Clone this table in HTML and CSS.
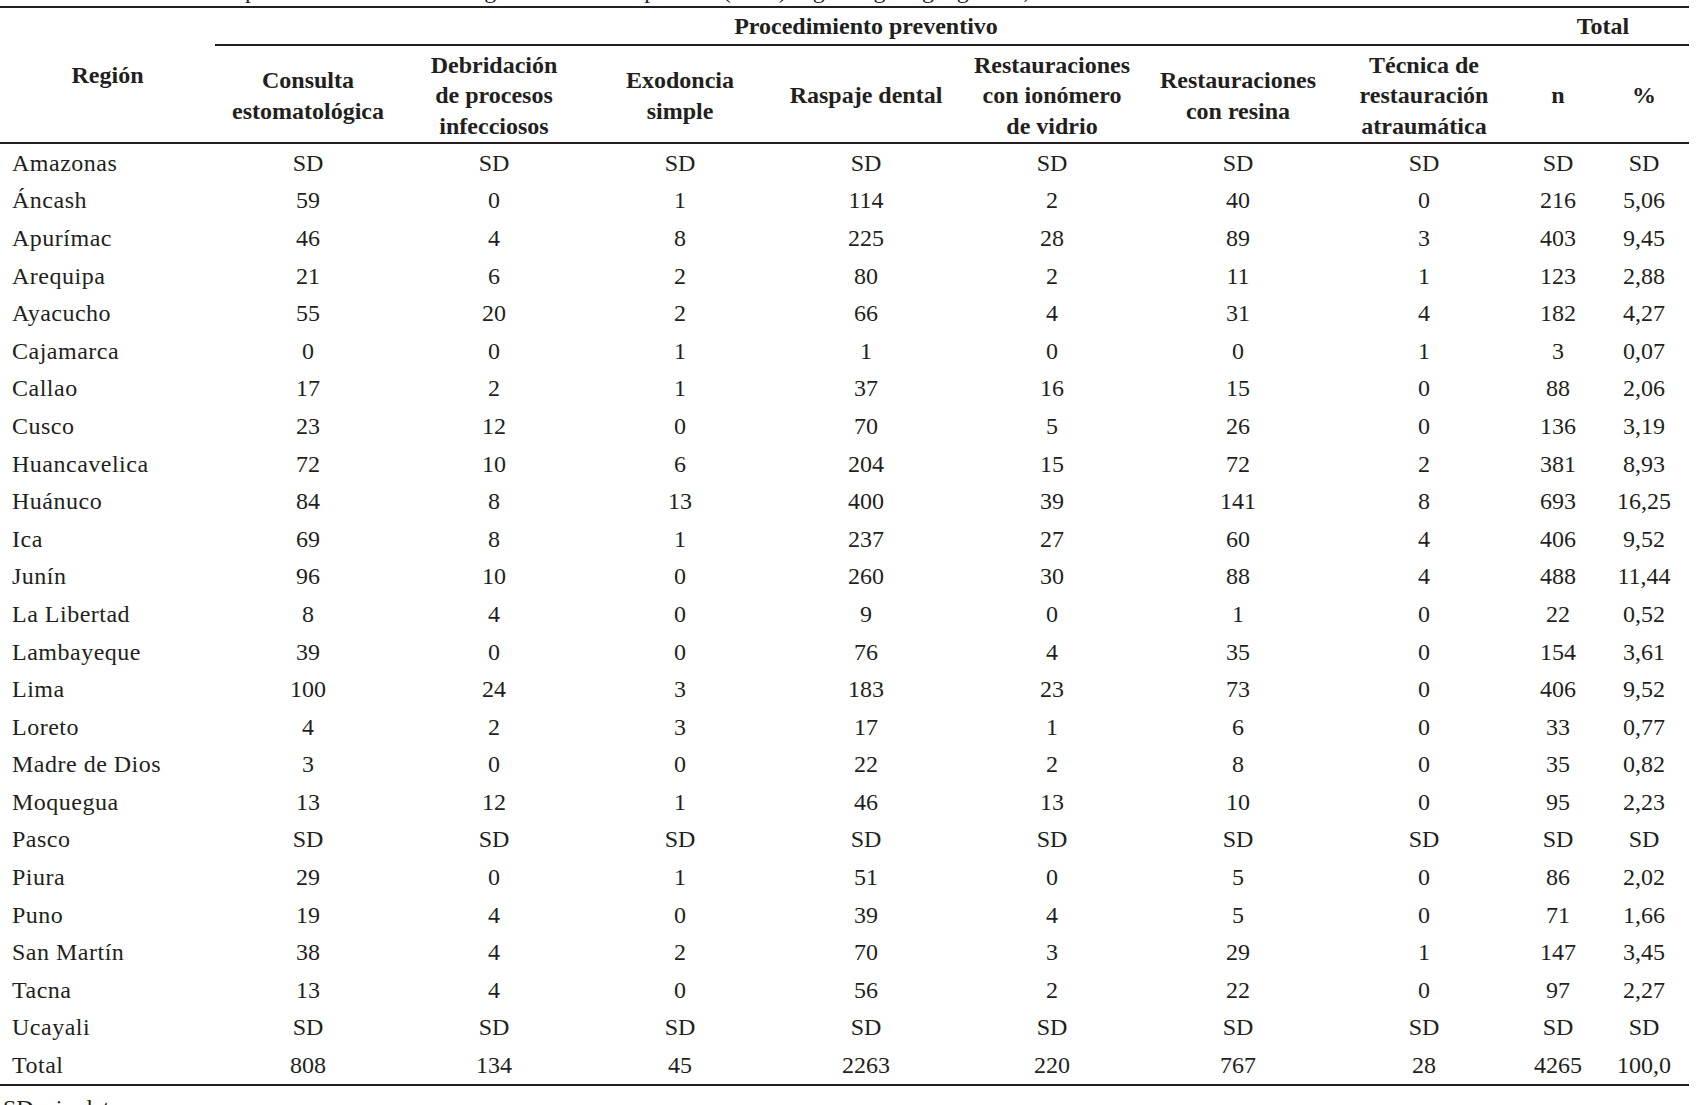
FILE: index.html
```html
<!DOCTYPE html>
<html lang="es">
<head>
<meta charset="utf-8">
<title>Procedimiento preventivo por región</title>
<link rel="stylesheet" href="styles.css">
</head>
<body>
<div class="caption">Tabla 3. Número total de procedimientos odontológicos realizados por año (2018) según región geográfica, Perú</div>
<table class="data">
  <colgroup>
    <col class="c-region">
    <col class="c-proc"><col class="c-proc"><col class="c-proc"><col class="c-proc"><col class="c-proc"><col class="c-proc"><col class="c-proc">
    <col class="c-n">
    <col class="c-pct">
  </colgroup>
  <thead>
    <tr class="h1">
      <th rowspan="2" class="region-h">Región</th>
      <th colspan="7" class="group">Procedimiento preventivo</th>
      <th colspan="2" class="group">Total</th>
    </tr>
    <tr class="h2">
      <th>Consulta<br>estomatológica</th>
      <th>Debridación<br>de procesos<br>infecciosos</th>
      <th>Exodoncia<br>simple</th>
      <th>Raspaje dental</th>
      <th>Restauraciones<br>con ionómero<br>de vidrio</th>
      <th>Restauraciones<br>con resina</th>
      <th>Técnica de<br>restauración<br>atraumática</th>
      <th>n</th>
      <th>%</th>
    </tr>
  </thead>
  <tbody>
    <tr><td class="reg">Amazonas</td><td>SD</td><td>SD</td><td>SD</td><td>SD</td><td>SD</td><td>SD</td><td>SD</td><td>SD</td><td>SD</td></tr>
    <tr><td class="reg">Áncash</td><td>59</td><td>0</td><td>1</td><td>114</td><td>2</td><td>40</td><td>0</td><td>216</td><td>5,06</td></tr>
    <tr><td class="reg">Apurímac</td><td>46</td><td>4</td><td>8</td><td>225</td><td>28</td><td>89</td><td>3</td><td>403</td><td>9,45</td></tr>
    <tr><td class="reg">Arequipa</td><td>21</td><td>6</td><td>2</td><td>80</td><td>2</td><td>11</td><td>1</td><td>123</td><td>2,88</td></tr>
    <tr><td class="reg">Ayacucho</td><td>55</td><td>20</td><td>2</td><td>66</td><td>4</td><td>31</td><td>4</td><td>182</td><td>4,27</td></tr>
    <tr><td class="reg">Cajamarca</td><td>0</td><td>0</td><td>1</td><td>1</td><td>0</td><td>0</td><td>1</td><td>3</td><td>0,07</td></tr>
    <tr><td class="reg">Callao</td><td>17</td><td>2</td><td>1</td><td>37</td><td>16</td><td>15</td><td>0</td><td>88</td><td>2,06</td></tr>
    <tr><td class="reg">Cusco</td><td>23</td><td>12</td><td>0</td><td>70</td><td>5</td><td>26</td><td>0</td><td>136</td><td>3,19</td></tr>
    <tr><td class="reg">Huancavelica</td><td>72</td><td>10</td><td>6</td><td>204</td><td>15</td><td>72</td><td>2</td><td>381</td><td>8,93</td></tr>
    <tr><td class="reg">Huánuco</td><td>84</td><td>8</td><td>13</td><td>400</td><td>39</td><td>141</td><td>8</td><td>693</td><td>16,25</td></tr>
    <tr><td class="reg">Ica</td><td>69</td><td>8</td><td>1</td><td>237</td><td>27</td><td>60</td><td>4</td><td>406</td><td>9,52</td></tr>
    <tr><td class="reg">Junín</td><td>96</td><td>10</td><td>0</td><td>260</td><td>30</td><td>88</td><td>4</td><td>488</td><td>11,44</td></tr>
    <tr><td class="reg">La Libertad</td><td>8</td><td>4</td><td>0</td><td>9</td><td>0</td><td>1</td><td>0</td><td>22</td><td>0,52</td></tr>
    <tr><td class="reg">Lambayeque</td><td>39</td><td>0</td><td>0</td><td>76</td><td>4</td><td>35</td><td>0</td><td>154</td><td>3,61</td></tr>
    <tr><td class="reg">Lima</td><td>100</td><td>24</td><td>3</td><td>183</td><td>23</td><td>73</td><td>0</td><td>406</td><td>9,52</td></tr>
    <tr><td class="reg">Loreto</td><td>4</td><td>2</td><td>3</td><td>17</td><td>1</td><td>6</td><td>0</td><td>33</td><td>0,77</td></tr>
    <tr><td class="reg">Madre de Dios</td><td>3</td><td>0</td><td>0</td><td>22</td><td>2</td><td>8</td><td>0</td><td>35</td><td>0,82</td></tr>
    <tr><td class="reg">Moquegua</td><td>13</td><td>12</td><td>1</td><td>46</td><td>13</td><td>10</td><td>0</td><td>95</td><td>2,23</td></tr>
    <tr><td class="reg">Pasco</td><td>SD</td><td>SD</td><td>SD</td><td>SD</td><td>SD</td><td>SD</td><td>SD</td><td>SD</td><td>SD</td></tr>
    <tr><td class="reg">Piura</td><td>29</td><td>0</td><td>1</td><td>51</td><td>0</td><td>5</td><td>0</td><td>86</td><td>2,02</td></tr>
    <tr><td class="reg">Puno</td><td>19</td><td>4</td><td>0</td><td>39</td><td>4</td><td>5</td><td>0</td><td>71</td><td>1,66</td></tr>
    <tr><td class="reg">San Martín</td><td>38</td><td>4</td><td>2</td><td>70</td><td>3</td><td>29</td><td>1</td><td>147</td><td>3,45</td></tr>
    <tr><td class="reg">Tacna</td><td>13</td><td>4</td><td>0</td><td>56</td><td>2</td><td>22</td><td>0</td><td>97</td><td>2,27</td></tr>
    <tr><td class="reg">Ucayali</td><td>SD</td><td>SD</td><td>SD</td><td>SD</td><td>SD</td><td>SD</td><td>SD</td><td>SD</td><td>SD</td></tr>
    <tr class="last"><td class="reg">Total</td><td>808</td><td>134</td><td>45</td><td>2263</td><td>220</td><td>767</td><td>28</td><td>4265</td><td>100,0</td></tr>
  </tbody>
</table>
<p class="note">SD: sin dato</p>
</body>
</html>
```

FILE: styles.css
```css
html, body {
  margin: 0;
  padding: 0;
  background: #ffffff;
}

body {
  font-family: "Liberation Serif", "Times New Roman", serif;
  font-size: 24px;
  color: #231f20;
  overflow: hidden;
}

.caption {
  margin-top: -22px;
  height: 24px;
  line-height: 24px;
  white-space: nowrap;
  color: #231f20;
}

.data {
  margin-top: 4px;
  width: 1689px;
  table-layout: fixed;
  border-collapse: separate;
  border-spacing: 0;
  border-top: 2px solid #231f20;
}

.c-region { width: 215px; }
.c-proc { width: 186px; }
.c-n { width: 82px; }
.c-pct { width: 90px; }

th, td {
  padding: 0;
  text-align: center;
  vertical-align: middle;
}

th {
  font-weight: bold;
}

.h1 {
  height: 38px;
}

.h1 th.group {
  border-bottom: 2px solid #231f20;
  line-height: 28px;
}

.region-h {
  border-bottom: 2px solid #231f20;
}

.h2 {
  height: 98px;
}

.h2 th {
  line-height: 30.5px;
  padding-top: 3px;
  border-bottom: 2px solid #231f20;
}

tbody tr {
  height: 37.6px;
}

tbody td {
  line-height: 28px;
}

td.reg {
  text-align: left;
  padding-left: 12px;
  letter-spacing: 0.5px;
}

tbody tr.last {
  height: 39.6px;
}

tbody tr.last td {
  border-bottom: 2px solid #231f20;
}

.note {
  margin: 10px 0 0 3px;
  line-height: 24px;
}
```
